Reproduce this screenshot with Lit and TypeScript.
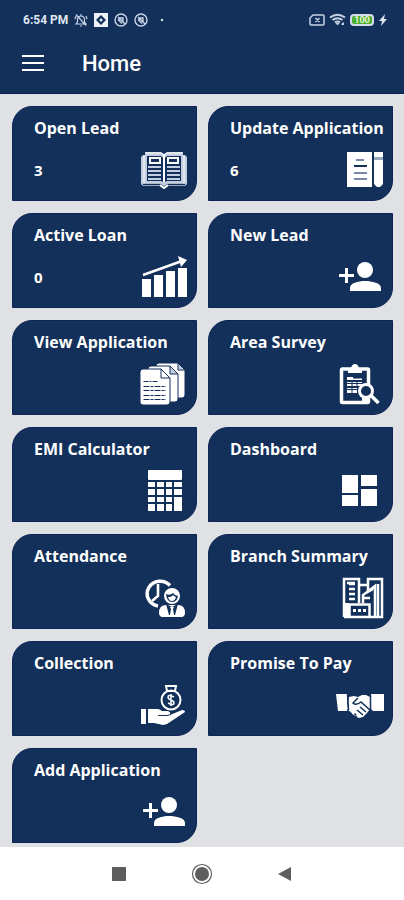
import { LitElement, html, svg, css, nothing, type TemplateResult } from "lit";
import { customElement, property } from "lit/decorators.js";

const NAVY = "#12305a";

const personAdd = svg`
  <path d="M9 13h3v6h6v3h-6v6H9v-6H3v-3h6z"/>
  <circle cx="29" cy="15" r="8"/>
  <path d="M14 36v-3c0-5 8-7 15-7s16 2 16 7v3z"/>`;

const icons: Record<string, TemplateResult | unknown> = {
  book: svg`
    <path fill="#c3cede" d="M3 7h2V4h16l3 2 3-2h16v3h2l2 2v27l-2 2H28l-4 3-4-3H3l-2-2V9z"/>
    <path fill="none" stroke="#fff" d="M4 8v28h16M44 8v28H28M6 5h15l3 2 3-2h15"/>
    <path fill="${NAVY}" d="M7 8h14l2 2v24l-2-1H7zM27 8h14v25H27l-2 1V10z"/>
    <path fill="#fff" d="M9 9h12v7H9zM27 9h12v7H27z"/>
    <path fill="${NAVY}" d="M11 11h8v3h-8zM29 11h8v3h-8z"/>
    <path fill="none" stroke="#c3cede" stroke-width="2" d="M8 19h13M8 23h13M8 27h13M8 31h13M27 19h13M27 23h13M27 27h13M27 31h13"/>
    <path fill="none" stroke="#fff" stroke-width="2" d="M24 7v27"/>
    <path fill="none" stroke="${NAVY}" stroke-width="1.5" d="M3 36.500h17l4 2.500 4-2.500h17"/>
    <path fill="none" stroke="#fff" stroke-width="2" d="M20 37l4 3 4-3"/>`,
  chart: svg`
    <path d="M2 24h9v18H2zM14 20h9v22h-9zM26 16h9v26h-9zM38 13h9v29h-9z"/>
    <path fill="none" stroke="#fff" stroke-width="2.600" d="M3 20L42 6"/>
    <path d="M38 1l9 4-6 7z"/>`,
  edit: svg`
    <path d="M11 4h25v35H11z"/>
    <path d="M38 4h9v6h-9zM38 12h9v24l-3 3h-3l-3-3z"/>
    <path fill="#9aa9c0" d="M38 9h9v3h-9z"/>
    <g fill="none" stroke-width="2"><path stroke="#7889a6" d="M20 12h8M18 25h13M18 31h13"/><path stroke="${NAVY}" d="M18 18h13"/></g>`,
  personAdd,
  pages: svg`
    <g stroke="${NAVY}" stroke-width="1">
      <path d="M19 1h19l7 7v25q0 3-3 3H19q-3 0-3-3V4q0-3 3-3z"/><path fill="#c3cede" d="M38 1v7h7z"/>
      <path d="M11 4h19l8 8v25q0 3-3 3H11q-3 0-3-3V7q0-3 3-3z"/><path fill="#c3cede" d="M30 4v8h8z"/>
      <path d="M3 7h18l9 9v24q0 3-3 3H3q-3 0-3-3V10q0-3 3-3z"/><path fill="#fff" d="M21 7v9h9z"/>
    </g>
    <g fill="none" stroke="${NAVY}" stroke-width="1.200"><path stroke-dasharray="5 1 2 1" d="M3.500 19.500H18"/><path stroke-dasharray="6 1 3 1" d="M3.500 24.500H26M3.500 28.500H26M3.500 33.500H26M3.500 37.500H26"/></g>`,
  survey: svg`
    <rect x="5.500" y="7" width="27" height="33.500" rx="1" fill="none" stroke="#fff" stroke-width="3.500"/>
    <path d="M12 11V6h3q1-4 4-4t4 4h3v5z"/>
    <path d="M11 15h6v1.500h9V18H11zM11 20h15v4H11zM11 26h10v5H11z"/>
    <path stroke="${NAVY}" d="M11 21.500h15M11 27.500h10M16 18v14M21 18v6"/>
    <path d="M26 33h8v8h-8z"/>
    <circle cx="30" cy="29" r="6.500" fill="${NAVY}" stroke="#fff" stroke-width="3"/>
    <path fill="none" stroke="#fff" stroke-width="3.500" d="M34.500 33l8 8"/>`,
  calculator: svg`
    <rect x="8" y="1" width="34" height="10" rx="1"/>
    <path d="M8 13h7v5H8zM17 13h7v5h-7zM26 13h6v5h-6zM34 13h8v5h-8zM8 20h7v6H8zM17 20h7v6h-7zM26 20h6v6h-6zM34 20h8v6h-8zM8 28h7v5H8zM17 28h7v5h-7zM26 28h6v5h-6zM8 35h7v7H8zM17 35h7v7h-7zM26 35h6v7h-6zM34 28h8v14h-8z"/>`,
  dashboard: svg`<path d="M6 6h16v18H6zM6 26h16v11H6zM25 6h16v11H25zM25 20h16v17H25z"/>`,
  attendance: svg`
    <path fill="none" stroke="#fff" stroke-width="3.500" d="M30 9.500A13 12.500 0 1 0 18 30"/>
    <path fill="none" stroke="#fff" stroke-width="2.600" d="M18 8v12l-6 5"/>
    <circle cx="32" cy="20" r="9.500" fill="${NAVY}"/>
    <circle cx="32" cy="20" r="8"/>
    <path fill="${NAVY}" d="M26 18q4 2 7-1 2 3 5 3-1 6-6 6t-6-8z"/>
    <path fill="#fff" d="M28 21q4 0 5-2 2 2 3 2-1 4-4 4t-4-4z"/>
    <path d="M19 37q0-8 7-8h12q7 0 7 8 0 3-3 4H22q-3-1-3-4z"/>
    <path fill="${NAVY}" d="M26 28l6 3 6-3-3 11h-6z"/>
    <path d="M30 31h4l-1 2 1 6-2 2-2-2 1-6z"/>`,
  branch: svg`
    <g fill="none" stroke="#fff" stroke-width="2.500">
      <path d="M8 41V3h15v24M8 41h38V3H32v13M23 9h9M11 38V28M11 7h8M27 27V19l12-9v30M42 8v33M30 17l7-4"/>
      <path d="M13 8h6M13 13h6M13 18h6M13 23h6M27 22h7"/>
      <path d="M13.500 40V28.500h20V40"/>
    </g>
    <path d="M22 8h10v2H22zM9 27h4v14H9z"/>
    <path fill="${NAVY}" d="M15 30h17v9H15z"/>
    <path d="M17 33h3v3h-3zM22 33h3v3h-3zM27 33h3v3h-3z"/>`,
  collection: svg`
    <path fill="none" stroke="#fff" stroke-width="2" d="M26 3h10l-1 5h-8z"/>
    <circle cx="31" cy="17" r="9.500" fill="none" stroke="#fff" stroke-width="2"/>
    <path fill="none" stroke="#fff" stroke-width="1.500" d="M34 14q-6-3-6 0 0 2 3 3t3 3q0 3-6 0M31 11v12"/>
    <path d="M1 26h5v15H1z"/>
    <path d="M8 26h9q3 0 5 2h6q3 1 2 4l12-5q3 0 3 2L27 41l-4 1-9-2H8z"/>
    <path fill="none" stroke="${NAVY}" d="M18 32.500h9l4-1"/>`,
  handshake: svg`
    <path d="M0 11h11v17H2zM48 11H35v15l2 2h11z"/>
    <path d="M13 14l5-1 4 1 4-2h4l4 2v12l-3 4-4 4-4 1-5-3-7-6z"/>
    <path fill="none" stroke="${NAVY}" stroke-width="1.500" d="M22 15l-5 5q3 3 8-1l9 8M24 24l6 5M21 27l6 5M18 30l4 4M11.500 11l1 16M34.500 12v15"/>
    <path d="M16 29l3-2 1 2-3 3zM20 32l3-2 1 2-2 3z"/>`,
};

interface Tile {
  label: string;
  icon: string;
  count?: number;
}

const tiles: Tile[] = [
  { label: "Open Lead", icon: "book", count: 3 },
  { label: "Update Application", icon: "edit", count: 6 },
  { label: "Active Loan", icon: "chart", count: 0 },
  { label: "New Lead", icon: "personAdd" },
  { label: "View Application", icon: "pages" },
  { label: "Area Survey", icon: "survey" },
  { label: "EMI Calculator", icon: "calculator" },
  { label: "Dashboard", icon: "dashboard" },
  { label: "Attendance", icon: "attendance" },
  { label: "Branch Summary", icon: "branch" },
  { label: "Collection", icon: "collection" },
  { label: "Promise To Pay", icon: "handshake" },
  { label: "Add Application", icon: "personAdd" },
];

@customElement("menu-tile")
export class MenuTile extends LitElement {
  @property() label = "";
  @property() icon = "";
  @property({ type: Number }) count?: number;

  static styles = css`
    :host {
      display: block;
    }
    .tile {
      box-sizing: border-box;
      display: grid;
      grid-template-columns: 1fr 48px;
      grid-template-rows: 24px 44px;
      row-gap: 8px;
      width: 100%;
      padding: 9px 8px 8px 21px;
      border: 1px solid #0c2456;
      border-radius: 20px 0;
      background: #12305a;
      color: #fff;
      font: 700 15px/24px "Open Sans", "Noto Sans", sans-serif;
      text-align: left;
      cursor: pointer;
    }
    .label {
      grid-column: 1 / -1;
      font-size: 16px;
      white-space: nowrap;
    }
    .count {
      grid-column: 1;
      padding-top: 10px;
    }
    .icon {
      grid-column: 2;
      display: block;
      width: 48px;
      height: 44px;
      fill: #fff;
    }
  `;

  render() {
    return html`<button class="tile" type="button">
      <span class="label">${this.label}</span>
      ${this.count === undefined ? nothing : html`<span class="count">${this.count}</span>`}
      <svg class="icon" viewBox="0 0 48 44" aria-hidden="true">${icons[this.icon]}</svg>
    </button>`;
  }
}

@customElement("status-bar")
export class StatusBar extends LitElement {
  static styles = css`
    :host {
      display: flex;
      align-items: center;
      justify-content: space-between;
      height: 28px;
      padding: 6px 16px 0 23px;
      color: #dfe6f2;
      font: 700 12px/16px Roboto, sans-serif;
    }
    .group {
      display: flex;
      align-items: center;
      gap: 6px;
    }
    .right {
      gap: 4px;
    }
    svg {
      display: block;
      fill: none;
      stroke: #c8d3e6;
    }
    .battery {
      box-sizing: border-box;
      display: flex;
      align-items: center;
      justify-content: center;
      width: 24px;
      height: 12px;
      border: 2px solid #d3dcea;
      border-radius: 4px;
      background: #4caf2f;
      color: #e9f6d8;
      font-size: 9px;
      line-height: 8px;
    }
  `;

  private blocked() {
    return html`<svg width="14" height="14" viewBox="0 0 14 14">
      <circle cx="7" cy="7" r="6" stroke-width="1.400" />
      <path d="M4 4l7 7M5 8V5h4v4M4 6.500l4 4" stroke-width="1.400" />
    </svg>`;
  }

  render() {
    return html`
      <div class="group">
        <span>6:54 PM</span>
        <svg width="14" height="14" viewBox="0 0 14 14">
          <path d="M2 11h10l-1.500-2V6Q10 3 7 3T3.500 6v3zM6 13h2M7 1v2M2 1.500l10 11M1 6l1-3M13 6l-1-3" stroke-width="1.200" />
        </svg>
        <svg width="14" height="14" viewBox="0 0 14 14">
          <path fill="#eef2f8" stroke="none" d="M0 0h14v14H0z" />
          <path fill="#12305a" stroke="none" d="M7 2l5 5-5 5-5-5z" />
          <circle cx="7" cy="7" r="1.500" fill="#eef2f8" stroke="none" />
        </svg>
        ${this.blocked()} ${this.blocked()}
        <svg width="16" height="14" viewBox="0 0 16 14"><circle cx="8" cy="7" r="1.200" fill="#dfe6f2" stroke="none" /></svg>
      </div>
      <div class="group right">
        <svg width="16" height="12" viewBox="0 0 16 12">
          <path d="M4 1h10q1 0 1 1v8q0 1-1 1H2q-1 0-1-1V4zM6.500 4l4 4M10.500 4l-4 4" stroke-width="1.500" />
        </svg>
        <svg width="17" height="14" viewBox="0 0 17 14">
          <path d="M1 4.500Q8.500-1 16 4.500M3.500 7q5-3.500 10 0M6 9.500q2.500-2 5 0" stroke-width="2" />
          <path fill="#c8d3e6" stroke="none" d="M6.500 10h4l-2 2.500zM12 11l3-2v3h-2z" />
        </svg>
        <div class="battery">100</div>
        <svg width="10" height="12" viewBox="0 0 10 12"><path fill="#dfe6f2" stroke="none" d="M7 0L1 7h3l-1 5 6-7H6z" /></svg>
      </div>
    `;
  }
}

@customElement("app-root")
export class AppRoot extends LitElement {
  static styles = css`
    :host {
      display: flex;
      flex-direction: column;
      min-height: 100vh;
      background: #e0e1e4;
    }
    .top {
      background: #12305a;
      border-bottom: 1px solid #0c1f54;
    }
    .app-bar {
      display: flex;
      align-items: center;
      gap: 34px;
      height: 59px;
      padding: 0 18px;
    }
    h1 {
      margin: 0;
      color: #fff;
      font: 500 22px/28px Roboto, sans-serif;
    }
    button {
      display: flex;
      align-items: center;
      justify-content: center;
      padding: 0;
      border: 0;
      background: none;
      cursor: pointer;
    }
    .menu {
      width: 30px;
      height: 40px;
      fill: #fff;
    }
    .tiles {
      flex: 1;
      display: grid;
      grid-template-columns: 1fr 1fr;
      align-content: start;
      gap: 12px 11px;
      padding: 12px 11px 4px 12px;
    }
    .nav {
      display: flex;
      justify-content: center;
      height: 53px;
      background: #fff;
    }
    .nav button {
      width: 83px;
      fill: #5e5e5e;
    }
  `;

  render() {
    return html`
      <header class="top">
        <status-bar></status-bar>
        <div class="app-bar">
          <button class="menu" type="button" aria-label="Menu">
            <svg width="22" height="22" viewBox="0 0 22 22"><path d="M0 2h22v2H0zM0 9h22v2H0zM0 16h22v2H0z" /></svg>
          </button>
          <h1>Home</h1>
        </div>
      </header>
      <main class="tiles">
        ${tiles.map((t) => html`<menu-tile .label=${t.label} .icon=${t.icon} .count=${t.count}></menu-tile>`)}
      </main>
      <nav class="nav">
        <button type="button" aria-label="Recent apps">
          <svg width="22" height="22" viewBox="0 0 22 22"><path d="M4 4h14v14H4z" /></svg>
        </button>
        <button type="button" aria-label="Home screen">
          <svg width="22" height="22" viewBox="0 0 22 22">
            <circle cx="11" cy="11" r="9.500" fill="none" stroke="#5e5e5e" stroke-width="1.200" />
            <circle cx="11" cy="11" r="7" />
          </svg>
        </button>
        <button type="button" aria-label="Back">
          <svg width="22" height="22" viewBox="0 0 22 22"><path d="M4 11l13-7v14z" /></svg>
        </button>
      </nav>
    `;
  }
}
